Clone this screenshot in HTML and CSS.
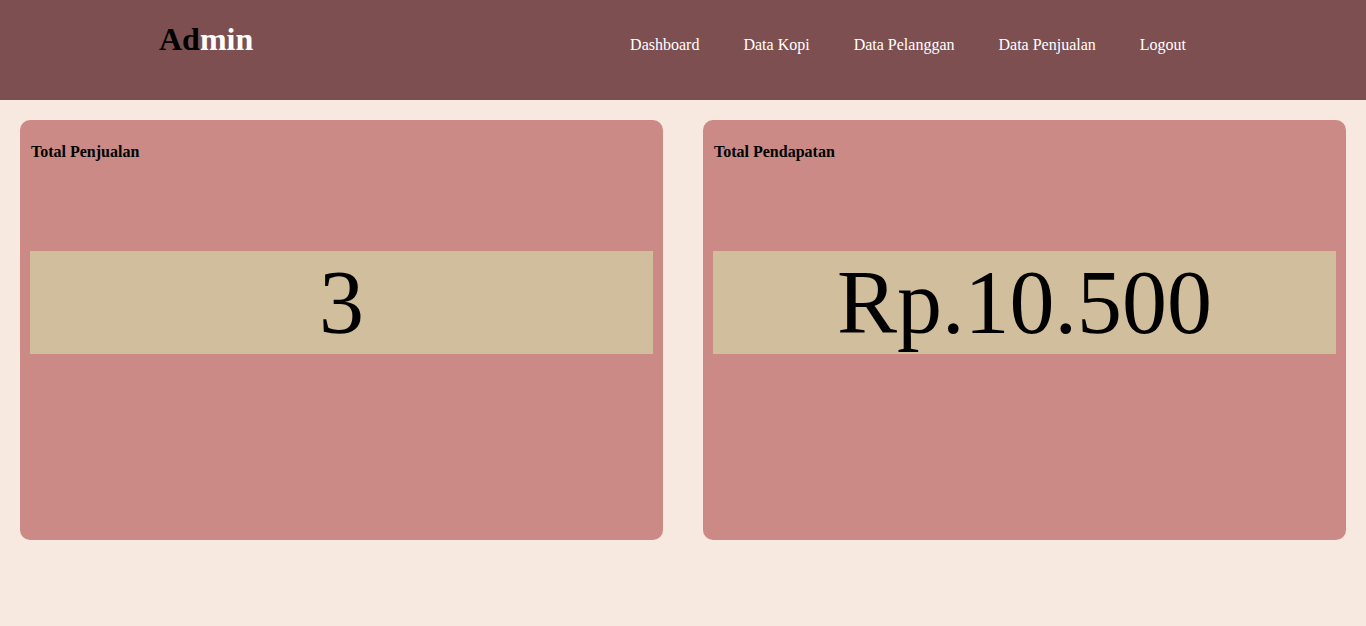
FILE: index.html
```html
<!DOCTYPE html>
<html>
<head>
<meta charset="utf-8">
<title>Admin</title>
<link rel="stylesheet" href="styles.css">
</head>
<body>
<header class="topbar">
  <div class="logo"><span class="logo-dark">Ad</span><span class="logo-light">min</span></div>
  <nav class="nav">
    <a href="#">Dashboard</a>
    <a href="#">Data Kopi</a>
    <a href="#">Data Pelanggan</a>
    <a href="#">Data Penjualan</a>
    <a href="#">Logout</a>
  </nav>
</header>
<main class="cards">
  <section class="card">
    <h4 class="card-title">Total Penjualan</h4>
    <div class="card-value">3</div>
  </section>
  <section class="card">
    <h4 class="card-title">Total Pendapatan</h4>
    <div class="card-value">Rp.10.500</div>
  </section>
</main>
</body>
</html>
```
FILE: styles.css
```css
html, body {
  margin: 0;
  padding: 0;
}
body {
  background: #f8e9e0;
  font-family: "Liberation Serif", "Times New Roman", serif;
  color: #000;
  height: 626px;
  overflow: hidden;
}
.topbar {
  height: 100px;
  background: #7d4f50;
  display: flex;
  align-items: flex-start;
  justify-content: space-between;
  padding: 0 180px 0 159px;
  box-sizing: border-box;
}
.logo {
  margin-top: 21px;
  font-size: 32px;
  font-weight: bold;
}
.logo-dark { color: #000; }
.logo-light { color: #fff; }
.nav {
  margin-top: 36px;
  display: flex;
  gap: 44px;
  font-size: 16px;
}
.nav a {
  color: #fff;
  text-decoration: none;
}
.cards {
  display: grid;
  grid-template-columns: 1fr 1fr;
  gap: 40px;
  padding: 20px;
}
.card {
  background: #cc8a86;
  border-radius: 10px;
  height: 420px;
  box-sizing: border-box;
  padding: 10px;
}
.card-title {
  margin: 13px 0 0 1px;
  font-size: 16px;
  font-weight: bold;
  line-height: 18px;
}
.card-value {
  margin-top: 90px;
  background: #d1be9c;
  text-align: center;
  font-size: 90px;
  line-height: 103px;
  height: 103px;
}
```
